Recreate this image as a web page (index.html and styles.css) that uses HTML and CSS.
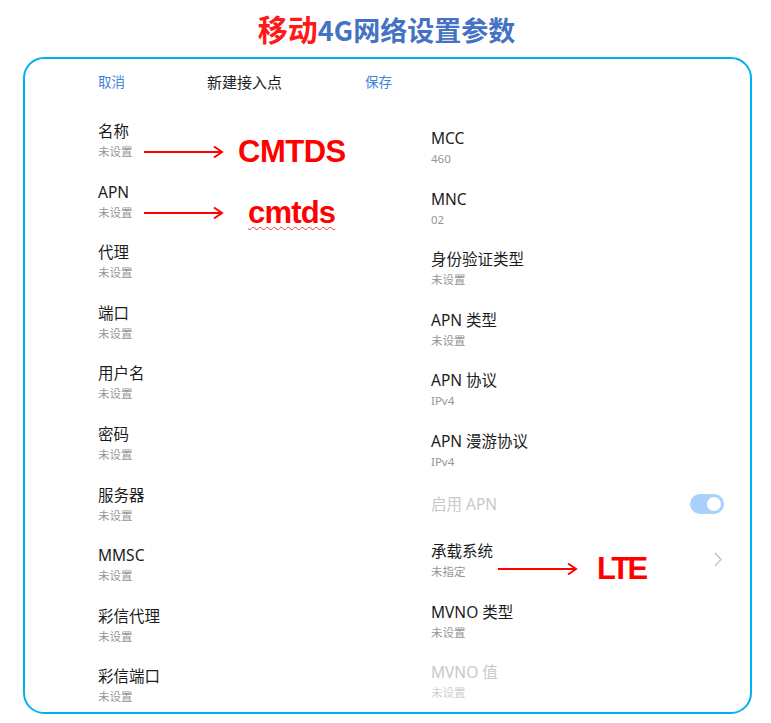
FILE: index.html
```html
<!DOCTYPE html>
<html lang="zh-CN">
<head>
<meta charset="utf-8">
<title>移动4G网络设置参数</title>
<link rel="stylesheet" href="styles.css">
</head>
<body>
<div class="page">
  <h1 class="title"><span class="red">移动</span><span class="blue">4G网络设置参数</span></h1>
  <div class="frame">
    <div class="topbar">
      <span class="act">取消</span>
      <span class="heading">新建接入点</span>
      <span class="act">保存</span>
    </div>
    <div class="cols">
      <div class="col col-left">
        <div class="item">
          <div class="t">名称</div><div class="s">未设置</div>
          <div class="note note-a">
            <svg class="arrow" width="80" height="14" viewBox="0 0 80 14"><path d="M0 7 H78" stroke="#f00" stroke-width="2" fill="none"/><path d="M70 1.5 L78 7 L70 12.5" stroke="#f00" stroke-width="2" fill="none"/></svg>
            <span class="mark mark-a">CMTDS</span>
          </div>
        </div>
        <div class="item">
          <div class="t">APN</div><div class="s">未设置</div>
          <div class="note note-a">
            <svg class="arrow" width="80" height="14" viewBox="0 0 80 14"><path d="M0 7 H78" stroke="#f00" stroke-width="2" fill="none"/><path d="M70 1.5 L78 7 L70 12.5" stroke="#f00" stroke-width="2" fill="none"/></svg>
            <span class="mark mark-b">cmtds</span>
          </div>
        </div>
        <div class="item"><div class="t">代理</div><div class="s">未设置</div></div>
        <div class="item"><div class="t">端口</div><div class="s">未设置</div></div>
        <div class="item"><div class="t">用户名</div><div class="s">未设置</div></div>
        <div class="item"><div class="t">密码</div><div class="s">未设置</div></div>
        <div class="item"><div class="t">服务器</div><div class="s">未设置</div></div>
        <div class="item"><div class="t">MMSC</div><div class="s">未设置</div></div>
        <div class="item"><div class="t">彩信代理</div><div class="s">未设置</div></div>
        <div class="item"><div class="t">彩信端口</div><div class="s">未设置</div></div>
      </div>
      <div class="col col-right">
        <div class="item"><div class="t">MCC</div><div class="s">460</div></div>
        <div class="item"><div class="t">MNC</div><div class="s">02</div></div>
        <div class="item"><div class="t">身份验证类型</div><div class="s">未设置</div></div>
        <div class="item"><div class="t">APN 类型</div><div class="s">未设置</div></div>
        <div class="item"><div class="t">APN 协议</div><div class="s">IPv4</div></div>
        <div class="item"><div class="t">APN 漫游协议</div><div class="s">IPv4</div></div>
        <div class="item toggle-row">
          <div class="t dim">启用 APN</div>
          <div class="switch"><div class="knob"></div></div>
        </div>
        <div class="item item-link">
          <div class="texts"><div class="t">承载系统</div><div class="s">未指定</div></div>
          <svg class="chev" width="8" height="15" viewBox="0 0 8 15"><path d="M1 1 L7 7.5 L1 14" stroke="#c4c4c4" stroke-width="1.4" fill="none"/></svg>
          <div class="note note-c">
            <svg class="arrow" width="80" height="14" viewBox="0 0 80 14"><path d="M0 7 H78" stroke="#f00" stroke-width="2" fill="none"/><path d="M70 1.5 L78 7 L70 12.5" stroke="#f00" stroke-width="2" fill="none"/></svg>
            <span class="mark mark-c">LTE</span>
          </div>
        </div>
        <div class="item"><div class="t">MVNO 类型</div><div class="s">未设置</div></div>
        <div class="item"><div class="t dim">MVNO 值</div><div class="s dim2">未设置</div></div>
      </div>
    </div>
  </div>
</div>
</body>
</html>
```

FILE: styles.css
```css
html, body {
  margin: 0;
  padding: 0;
  background: #ffffff;
}

.page {
  width: 771px;
  height: 723px;
  overflow: hidden;
  font-family: "Noto Sans", "Noto Sans CJK SC", sans-serif;
}

.title {
  margin: 0;
  height: 57px;
  line-height: 54px;
  text-align: center;
  font-family: "Noto Sans CJK SC", sans-serif;
  font-weight: 700;
  padding-left: 2px;
}

.title .red {
  color: #ff1a1a;
  font-size: 30px;
}

.title .blue {
  color: #4472c4;
  font-size: 27px;
}

.frame {
  position: relative;
  margin-left: 23px;
  width: 725px;
  height: 653px;
  border: 2px solid #00b0f0;
  border-radius: 21px;
  overflow: hidden;
  background: #fff;
}

.topbar {
  display: grid;
  grid-template-columns: 109px 158px auto;
  margin-top: 7px;
  padding-left: 73px;
  height: 30px;
  align-items: center;
  font-family: "Noto Sans CJK SC", sans-serif;
}

.act {
  color: #3f82d9;
  font-size: 13.5px;
}

.heading {
  color: #222;
  font-size: 15px;
}

.cols {
  display: grid;
  grid-template-columns: 333px 293px;
  padding-left: 73px;
}

.col-left {
  padding-top: 25px;
}

.col-right {
  padding-top: 32px;
}

.item {
  position: relative;
  height: 60.6px;
}

.t {
  font-size: 15.5px;
  line-height: 20px;
  color: #1c1c1c;
}

.s {
  margin-top: 3px;
  font-size: 11.5px;
  line-height: 16px;
  color: #969696;
}

.dim {
  color: #c9c9c9;
}

.dim2 {
  color: #cfcfcf;
}

.toggle-row {
  height: 49.4px;
  display: flex;
  justify-content: space-between;
  align-items: flex-start;
}

.toggle-row .t {
  line-height: 25px;
}

.switch {
  width: 34px;
  height: 20px;
  margin-top: 2.5px;
  border-radius: 10px;
  background: #a9d1fb;
  display: flex;
  align-items: center;
  justify-content: flex-end;
  padding-right: 3px;
  box-sizing: border-box;
}

.knob {
  width: 14px;
  height: 14px;
  border-radius: 50%;
  background: #fff;
}

.item-link {
  display: flex;
  justify-content: space-between;
  align-items: flex-start;
}

.chev {
  margin-top: 11px;
  margin-right: 2px;
}

.note {
  position: absolute;
  display: flex;
  align-items: center;
  height: 40px;
}

.note-a {
  left: 46px;
  top: 11px;
}

.note-c {
  left: 67px;
  top: 8px;
}

.arrow {
  display: block;
}

.mark {
  font-family: "Liberation Sans", Arial, sans-serif;
  font-weight: 700;
  color: #ff0000;
  font-size: 31px;
  line-height: 40px;
}

.mark-a {
  margin-left: 14px;
  letter-spacing: -0.5px;
}

.mark-b {
  margin-left: 24px;
  letter-spacing: -0.8px;
  text-decoration: underline wavy #e04040;
  text-decoration-thickness: 1px;
  text-underline-offset: 3px;
}

.mark-c {
  margin-left: 19px;
  letter-spacing: -2.5px;
}
```
